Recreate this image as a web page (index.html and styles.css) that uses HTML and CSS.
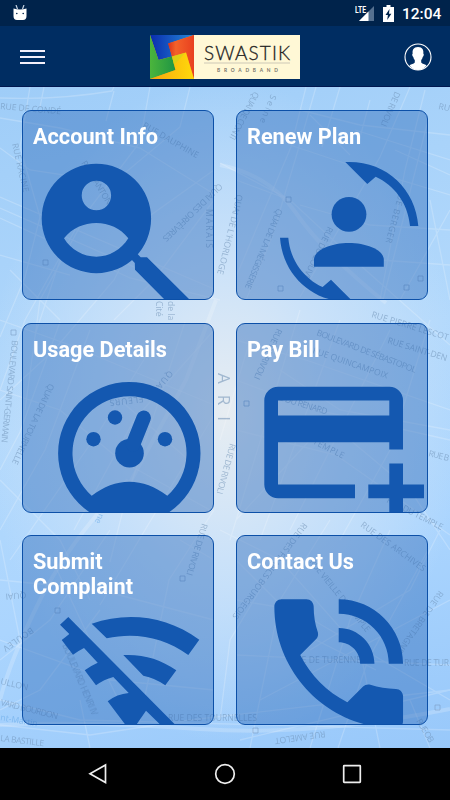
FILE: index.html
```html
<!DOCTYPE html>
<html lang="en">
<head>
    <meta charset="UTF-8">
    <meta name="viewport" content="width=device-width, initial-scale=1.0">
    <title>Swastik Broadband</title>
    <link rel="stylesheet" href="styles.css">
</head>
<body>
    <div class="screen">
        <div class="status">
            <svg class="droid" width="14" height="16" viewBox="0 0 14 16">
                <path d="M3 0l1.500 4M11 0L9.500 4" stroke="#c5d3e3" stroke-width="1.2"/>
                <path d="M.5 3.500q6.500 2 13 0V11q0 4-3.500 4H4Q.5 15 .5 11z" fill="#fff"/>
                <circle cx="3.800" cy="8.500" r=".8" fill="#00234b"/>
                <circle cx="10.200" cy="8.500" r=".8" fill="#00234b"/>
            </svg>
            <svg class="signal" width="20" height="17" viewBox="0 0 20 17">
                <path d="M19 1v15H4z" fill="#55708f"/>
                <path d="M13.500 6.500V16H4z" fill="#fff"/>
                <text x="0" y="8" textLength="11" lengthAdjust="spacingAndGlyphs">LTE</text>
            </svg>
            <svg class="battery" width="11" height="17" viewBox="0 0 11 17">
                <path d="M3.500 0h4v2H11v15H0V2h3.500z" fill="#fff"/>
                <path d="M6.500 4L2.500 10h2.400L4.200 15l4.200-6.300H6z" fill="#00234b"/>
            </svg>
            <span class="clock">12:04</span>
        </div>

        <div class="header">
            <div class="menu">
                <span></span>
                <span></span>
                <span></span>
            </div>
            <svg class="logo" width="150" height="44" viewBox="0 0 150 44">
                <defs>
                    <linearGradient id="blue"><stop offset="0" stop-color="#0a2cae"/><stop offset="1" stop-color="#2589d8"/></linearGradient>
                    <linearGradient id="green"><stop offset="0" stop-color="#4bb53c"/><stop offset="1" stop-color="#1f9544"/></linearGradient>
                    <linearGradient id="red"><stop offset="0" stop-color="#d9301c"/><stop offset=".3" stop-color="#f4622a"/><stop offset="1" stop-color="#e8401f"/></linearGradient>
                    <linearGradient id="yellow"><stop offset="0" stop-color="#f6a50f"/><stop offset="1" stop-color="#ffd90b"/></linearGradient>
                </defs>
                <rect width="150" height="44" fill="#fff8d6"/>
                <rect width="44" height="44" fill="#ee8a20"/>
                <path d="M0 0h44L18.500 8.500 22 21.500 8.500 25z" fill="url(#blue)"/>
                <path d="M0 0l8.500 25L22 21.500 25.500 35 0 44z" fill="url(#green)"/>
                <path d="M18 8.500L44 0v44l-8-26.500-14 4z" fill="url(#red)"/>
                <path d="M0 44l25.500-9L22 21.500l14-4L44 44z" fill="url(#yellow)"/>
                <path d="M22 21.500l13-3.500-11 12z" fill="#c9d51a" opacity=".6"/>
                <text class="brand" x="54" y="25" textLength="86">SWASTIK</text>
                <path d="M54 28h86" stroke="#cdc8b6"/>
                <text class="sub" x="67" y="36.500" textLength="61">BROADBAND</text>
            </svg>
            <svg class="user" width="28" height="28" viewBox="0 0 28 28">
                <circle cx="14" cy="14" r="13" fill="none" stroke="#fff" stroke-width="1.100"/>
                <path d="M14 4c4.500 0 5.800 3.200 5.300 6.500 1 .5.300 3-.6 3.400-.3 1.600-1 2.500-1.500 3.100v2.500c1.300 1.500 3.300 1.600 5.300 2.700Q19.500 27 14 27t-8.500-4.800c2-1.100 4-1.200 5.300-2.700V17c-.5-.6-1.200-1.500-1.500-3.100-.9-.4-1.600-2.900-.6-3.400C8.200 7.200 9.500 4 14 4z" fill="#fff"/>
            </svg>
        </div>

        <div class="main">
            <svg class="map" width="450" height="661" viewBox="0 87 450 661">
                <g class="streets">
                    <path d="M0 98q60 2 112-7l2-4M44 87l-4 20M114 91l-8 30M150 87l-10 55-50 66-50 92-15 110M190 87l-10 40-60 50M0 118l60 10 80 20 74 46M0 148l30 22 80 12M0 197l214 92M0 208l150 66M0 218l130 60 90 22M30 87l-10 60 20 70-15 60-25 60M75 230l-50 90-25 70M214 170l-70 50-30 60-60 70-54 50M0 255l70 20M60 260l-25 75M10 270l50 50M214 200l-60 80-40 40"/>
                    <path d="M316 87l-20 70-24 80-26 63M300 110l60 15 90 10M306 87l-15 60-55 130M220 163l70 37 70 65 90 80M236 180l54 20M340 87l-18 60M410 87l-30 70-80 140M370 100l-12 45M425 90l-20 80-25 130M290 145l60 20 100 30M300 205l70 20 80 5M320 240l60 20 70 5M428 120l-45 180M310 115l40 40M395 150l55 25M355 130l95 30M430 200l20 100M400 300l50-90"/>
                    <path d="M0 320l70 25 144 60M0 390l60 20 60 50 90 50M60 322l-40 110L0 470M90 330l-45 120-45 80M150 350l-50 80-90 130M185 322l-60 180-15 60M214 330l-80 90-60 110M0 540l20 100M0 480l60 60 30 60M0 580l100 10 114 30M120 400l80 70M214 415l-114 190M50 555l80 170M110 530l-60 90-50 40M214 510l-45 70-30 145M180 540l34 20M100 610l-60 80-40 20M0 640l110 40 104 10M0 700l80 20 370 10M0 725l90 10 100-15 260-30M80 700l10 48"/>
                    <path d="M236 340l70 20 144 50M236 380l80 30 134 30M236 430l100 25 114 80M250 340l-30 100M300 310l-70 230M340 320l-80 220M390 330l-100 200M430 320l-40 130-50 90M280 370l60 40 110 20M310 440l-74 80M350 440l60 50 40 60M220 530l60 30 80 90 20 98M290 540l-60 100-10 80M330 520l-50 80-30 148M390 530l-40 90-40 128M236 600l60 10 154 90M236 655l214 10M260 700l190-100M428 550l-60 110-30 88M236 560l80 80 60 30M440 530l-30 60-100 60M240 740l210-50M410 700l20 48"/>
                </g>
                <g class="wide">
                    <path d="M128 480Q70 540 40 600T0 700M216 300l-30 80-60 110"/>
                    <path d="M220 165q50 10 76 48t90 90"/>
                    <path d="M0 725q90-4 200 4t250-20"/>
                </g>
                <g class="stops">
                    <path d="M43 260h5v5h-5zM286 197h5v5h-5zM278 286h5v5h-5zM404 285h5v5h-5zM418 276h5v5h-5zM11 330h5v5h-5zM244 401h5v5h-5zM180 576h5v5h-5zM55 608h5v5h-5zM253 728h5v5h-5zM435 705h5v5h-5z"/>
                </g>
                <g class="labels">
                    <text transform="translate(0 109) rotate(5)" textLength="61">RUE DE CONDÉ</text>
                    <text transform="translate(142 127) rotate(30)" textLength="63">RUE DAUPHINE</text>
                    <text transform="translate(12 144) rotate(77)" textLength="50">RUE RACINE</text>
                    <text transform="translate(81 163) rotate(58)" textLength="50">RUE DANTON</text>
                    <text transform="translate(219 183) rotate(136)" textLength="79">QUAI DES ORFÈVRES</text>
                    <text transform="translate(206 209) rotate(90)" textLength="39">MARAIS</text>
                    <text transform="translate(237 194) rotate(104)" textLength="82">QUAI DE L'HORLOGE</text>
                    <text transform="translate(254 91) rotate(118)" textLength="53">QUAI DE CONTI</text>
                    <text transform="translate(271 94) rotate(112)" textLength="30">Seine</text>
                    <text transform="translate(395 91) rotate(113)" textLength="37">DE RIVOLI</text>
                    <text transform="translate(400 188) rotate(105)" textLength="56">RUE BERGER</text>
                    <text transform="translate(277 208) rotate(112)" textLength="86">QUAI DE LA MÉGISSERIE</text>
                    <text transform="translate(328 226) rotate(116)" textLength="63">RUE DU LOUVRE</text>
                    <text transform="translate(438 109) rotate(12)">RU</text>
                    <text transform="translate(168 301) rotate(90)">de la</text>
                    <text transform="translate(156 301) rotate(90)">Cité</text>
                    <text transform="translate(371 317) rotate(17)" textLength="80">RUE PIERRE LESCOT</text>
                    <text transform="translate(387 343) rotate(17)" textLength="62">RUE SAINT-DEN</text>
                    <text transform="translate(316 335) rotate(21)" textLength="106">BOULEVARD DE SÉBASTOPOL</text>
                    <text transform="translate(312 353) rotate(19)" textLength="79">RUE QUINCAMPOIX</text>
                    <text transform="translate(269 397) rotate(17)" textLength="60">RUE DU RENARD</text>
                    <text transform="translate(298 436) rotate(27)" textLength="50">DU TEMPLE</text>
                    <text transform="translate(277 328) rotate(115)" textLength="55">RUE DE RIVOLI</text>
                    <text transform="translate(428 456) rotate(14)" textLength="21">RUE B</text>
                    <text transform="translate(230 443) rotate(105)" textLength="52">RUE DE RIVOLI</text>
                    <text class="big" transform="translate(218 373) rotate(90)" textLength="48">ARI</text>
                    <text transform="translate(169 370) rotate(130)" textLength="24">QUAI</text>
                    <text transform="translate(143 396) rotate(173)" textLength="34">FLEURS</text>
                    <text transform="translate(386 502) rotate(27)" textLength="62">RUE DU TEMPLE</text>
                    <text transform="translate(360 526) rotate(36)" textLength="78">RUE DES ARCHIVES</text>
                    <text transform="translate(12 340) rotate(96)" textLength="103">BOULEVARD SAINT-GERMAIN</text>
                    <text transform="translate(49 383) rotate(115)" textLength="88">QUAI DE LA TOURNELLE</text>
                    <text class="water" transform="translate(99 513) rotate(115)">ne</text>
                    <text transform="translate(202 523) rotate(107)" textLength="54">RUE DE RIVOLI</text>
                    <text transform="translate(26 592) rotate(175)">QUAI</text>
                    <text transform="translate(31 627) rotate(145)" textLength="35">BOULEV</text>
                    <text transform="translate(0 684) rotate(13)">ULLON</text>
                    <text transform="translate(0 705) rotate(14)" textLength="59">VARD BOURDON</text>
                    <text class="water" transform="translate(0 720) rotate(10)">nt-Martin</text>
                    <text transform="translate(0 741) rotate(7)" textLength="44">LA BASTILLE</text>
                    <text transform="translate(62 645) rotate(67)" textLength="77">BOULEVARD HENRI IV</text>
                    <text transform="translate(168 721)" textLength="89">RUE DES TOURNELLES</text>
                    <text transform="translate(325 731) rotate(172)" textLength="51">RUE AMELOT</text>
                    <text transform="translate(303 522) rotate(127)" textLength="118">RUE DES FRANCS BOURGEOIS</text>
                    <text transform="translate(309 562) rotate(51)" textLength="91">RUE VIEILLE DU TEMPLE</text>
                    <text transform="translate(290 663)" textLength="71">RUE DE TURENNE</text>
                    <text transform="translate(404 666)" textLength="45">RUE DE TUR</text>
                    <text transform="translate(439 590) rotate(125)" textLength="74">RUE DE BRETAGNE</text>
                    <text transform="translate(416 721) rotate(59)" textLength="26">RUE OB</text>
                </g>
            </svg>

            <div class="cards">
                <div class="card">
                    <h2>Account Info</h2>
                    <svg class="icon" viewBox="22 110 192 190">
                        <path fill-rule="evenodd" d="M41.700 218.500a54.700 54.700 0 1 1 109.400 0a54.700 54.700 0 1 1-109.400 0zM81.700 195.500a14.700 14.700 0 1 0 29.400 0a14.700 14.700 0 1 0-29.400 0zM64 238.300C72 228 84 223 96.300 223S120.500 228 128.300 238.300C121 250 109 256.700 96.300 256.700S71 250 64 238.300z"/>
                        <path d="M137 253.500l3.700 3.800h6.300L190 300h-25l-30-30.300-.2-6.700-3.300-3.500z"/>
                    </svg>
                </div>
                <div class="card">
                    <h2>Renew Plan</h2>
                    <svg class="icon" viewBox="236 110 192 190">
                        <circle cx="349" cy="214.300" r="17.400"/>
                        <path d="M314 266.700V259c1-10 19-16 34.900-16s33.800 6 34.900 16v7.700z"/>
                        <path id="turn" d="M345.300 162l22 22 8.400-7.300C394 185 408 203 410 226h8.300C415.500 188 385 160 345.300 162z"/>
                        <use href="#turn" transform="rotate(180 349.150 231.850)"/>
                    </svg>
                </div>
                <div class="card">
                    <h2>Usage Details</h2>
                    <svg class="icon" viewBox="22 322.500 192 190">
                        <path fill-rule="evenodd" d="M58.100 452.700a71.200 71.200 0 1 1 142.400 0a71.200 71.200 0 1 1-142.400 0zM91.700 495.300C104 486 116 481.300 129.300 481.300S155 486 167.300 495.300A57 57 0 1 0 91.700 495.300z"/>
                        <circle cx="129.500" cy="452.700" r="14.300"/>
                        <circle cx="93.500" cy="438.700" r="7.200"/>
                        <circle cx="115" cy="417" r="7.200"/>
                        <circle cx="165" cy="438.700" r="7.200"/>
                        <path d="M133 444l10.700-26.700" stroke="#1458b0" stroke-width="14.400" stroke-linecap="round"/>
                    </svg>
                </div>
                <div class="card">
                    <h2>Pay Bill</h2>
                    <svg class="icon" viewBox="236 322.500 192 190">
                        <path fill-rule="evenodd" d="M278 386.300h111.500a13.500 13.500 0 0 1 13.500 13.500V449h-13.700v-7.300H278V484h77v13.700h-77a13.700 13.700 0 0 1-13.700-13.700V400a13.700 13.700 0 0 1 13.700-13.700zM278 400v15h111.300v-15z"/>
                        <path d="M389.300 463H403v21h21v13.700h-21V515h-13.700v-17.300h-21V484h21z"/>
                    </svg>
                </div>
                <div class="card">
                    <h2>Submit Complaint</h2>
                    <svg class="icon" viewBox="22 535 192 190">
                        <path d="M91.700 623.700C127 611.500 166 615.500 199.300 639.700L188.300 655C164 637.500 136 632 106.700 638.300z"/>
                        <path d="M123.300 655c20-1 37 4 53 15.300l-11 15Q155 678 143.300 675.700z"/>
                        <path d="M68.300 617L176.500 726H161.700L146 710.700 135.500 726H126.300L107.700 701.300Q117 694 128.700 693L113.300 677Q104 679.500 96 685.300l-11.300-15q6-4.500 13-7.600L84 648q-6 3-11 6.700L61.700 640q4-3 7.600-6L60 624.700z"/>
                    </svg>
                </div>
                <div class="card">
                    <h2>Contact Us</h2>
                    <svg class="icon" viewBox="236 535 192 190">
                        <path transform="translate(252.900 577.800) scale(7.150 7.170)" d="M20 15.500c-1.250 0-2.450-.2-3.570-.57-.35-.11-.74-.03-1.020.24l-2.200 2.200c-2.830-1.440-5.150-3.750-6.590-6.590l2.200-2.210c.28-.26.36-.65.25-1C8.700 6.450 8.500 5.250 8.500 4c0-.55-.45-1-1-1H4c-.55 0-1 .45-1 1 0 9.390 7.610 17 17 17 .55 0 1-.45 1-1v-3.500c0-.55-.45-1-1-1zM19 12h2c0-4.970-4.030-9-9-9v2c3.870 0 7 3.130 7 7zm-4 0h2c0-2.760-2.240-5-5-5v2c1.660 0 3 1.340 3 3z"/>
                    </svg>
                </div>
            </div>
        </div>

        <div class="navbar">
            <svg width="20" height="22" viewBox="0 0 20 22"><path d="M17.500 2v17.500L2 10.700z"/></svg>
            <svg width="22" height="22" viewBox="0 0 22 22"><circle cx="11" cy="11" r="9.300"/></svg>
            <svg width="20" height="20" viewBox="0 0 20 20"><rect x="1.700" y="1.700" width="16.600" height="16.600" rx=".5"/></svg>
        </div>
    </div>
</body>
</html>
```
FILE: styles.css
```css
*{
    padding: 0;
    margin: 0;
    box-sizing: border-box;
}

body{
    font-family: Roboto, "Liberation Sans", sans-serif;
    background-color: #000;
}
svg{
    display: block;
}
.screen{
    width: 450px;
    height: 800px;
    display: flex;
    flex-direction: column;
    overflow: hidden;
}
.status{
    height: 26px;
    padding: 0 8px 1px 13px;
    display: flex;
    align-items: center;
    background-color: #00234b;
    color: white;
}
.signal{
    margin-top: 1px;
    margin-left: auto;
    margin-right: 8px;
}
.signal text{
    font-size: 8.5px;
    font-weight: bold;
    fill: white;
}
.battery{
    margin-top: 1px;
    margin-right: 8px;
}
.clock{
    width: 40px;
    padding-top: 3px;
    font-size: 15.5px;
    font-weight: 500;
    white-space: nowrap;
}
.header{
    height: 61px;
    padding: 2px 18px 0 20px;
    display: flex;
    justify-content: space-between;
    align-items: center;
    background-color: #002d62;
    border-bottom: 1px solid #001750;
}
.menu{
    width: 26px;
    display: flex;
    flex-direction: column;
    gap: 4px;
}
.menu span{
    width: 25px;
    height: 2px;
    background-color: #f3effa;
}
.brand{
    font-family: Lato, sans-serif;
    font-size: 19px;
    font-weight: 300;
    fill: #222;
    stroke: #222;
    stroke-width: .3;
}
.sub{
    font-family: Lato, sans-serif;
    font-size: 4.8px;
    font-weight: bold;
    fill: #77736a;
}
.main{
    height: 661px;
    display: grid;
    background: radial-gradient(ellipse 240px 330px at 50% 49%, #e7edf2 0%, #cbe2f9 45%, rgba(176, 214, 250, 0) 100%), linear-gradient(165deg, #9fcdf8 0%, #b3d9fc 45%, #abd5fe 70%, #98c8fa 100%);
}
.map, .cards{
    grid-area: 1 / 1;
}
.streets, .wide{
    fill: none;
    stroke: white;
    stroke-width: 1.3;
    opacity: .2;
}
.wide{
    stroke-width: 4;
}
.stops{
    fill: none;
    stroke: #7d9fc4;
    opacity: .6;
}
.labels{
    font-family: "Open Sans", sans-serif;
    font-size: 8.6px;
    fill: #6d8fb3;
    opacity: .55;
}
.water{
    fill: #63a7e6;
}
.big{
    font-size: 17px;
}
.cards{
    z-index: 1;
    display: grid;
    grid-template-columns: 192px 192px;
    grid-template-rows: 190px 190px 190px;
    gap: 22.5px 22px;
    padding: 23px 22px;
}
.card{
    display: grid;
    overflow: hidden;
    border: 1px solid #0c50a8;
    border-radius: 9px;
    background-color: rgba(44, 104, 184, .44);
}
.card h2{
    grid-area: 1 / 1;
    z-index: 1;
    width: 150px;
    padding: 13px 0 0 10px;
    font-size: 21.7px;
    line-height: 25px;
    font-weight: 700;
    color: white;
}
.icon{
    grid-area: 1 / 1;
    width: 192px;
    height: 190px;
    margin: -1px;
    fill: #1458b0;
}
.navbar{
    height: 52px;
    padding: 0 88px;
    display: flex;
    justify-content: space-between;
    align-items: center;
    background-color: black;
}
.navbar svg{
    fill: none;
    stroke: #eee;
    stroke-width: 1.7;
}
```
